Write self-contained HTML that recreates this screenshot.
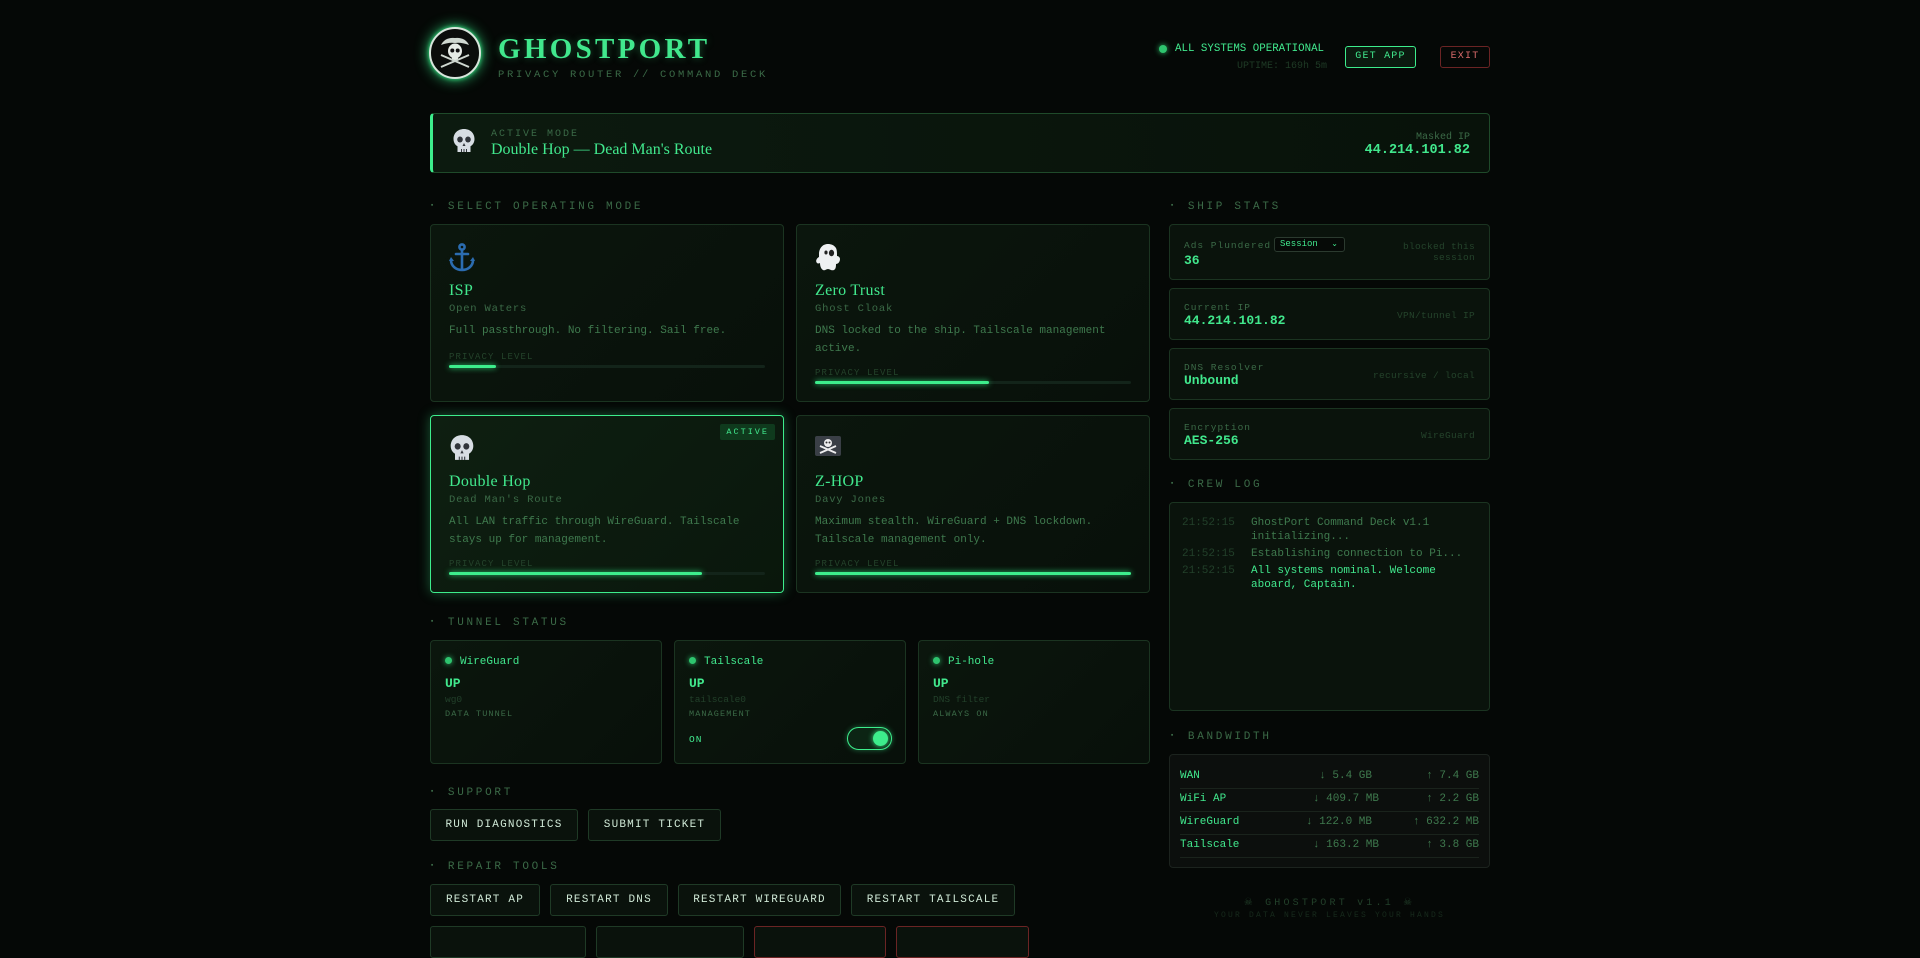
<!DOCTYPE html>
<html><head><meta charset="utf-8"><style>
*{box-sizing:border-box;margin:0;padding:0}
html,body{width:1920px;height:932px;overflow:hidden;background:#050806;font-family:"Liberation Mono",monospace;color:#3fe38a}
.a{position:absolute}
.serif{font-family:"Liberation Serif",serif}
.card{position:absolute;background:linear-gradient(135deg,#0b160d,#08100a);border:1px solid #1b3421;border-radius:4px}
.lbl{position:absolute;font-size:11px;letter-spacing:2.7px;color:#3b6a47}
.lbl:before{content:"▪";font-size:7px;margin-right:11px;vertical-align:2px}
.mt{font-size:16px;color:#41e88d;letter-spacing:.3px}
.ms{font-size:10.5px;letter-spacing:.8px;color:#3b6a47}
.md{font-size:11px;color:#3f7a4e;line-height:18px}
.pl{font-size:9px;letter-spacing:1.1px;color:#24432b}
.bar{height:3px;background:#13241a;border-radius:2px;position:relative}
.bar i{position:absolute;left:0;top:0;bottom:0;background:#3ded8c;border-radius:2px;box-shadow:0 0 6px #2fd67a}
.btn{position:absolute;height:32px;border:1px solid #1f3a26;background:#0a120c;border-radius:3px;color:#cfe8d6;font-size:11px;letter-spacing:1.2px;text-align:center;line-height:30px}
.st{position:absolute;left:1169px;width:321px;background:#0a130c;border:1px solid #1b3421;border-radius:4px}
.sl{font-size:9.5px;letter-spacing:1px;color:#3b6a47}
.sv{font-size:13px;font-weight:bold;color:#41e88d}
.sr{position:absolute;right:14px;font-size:9.5px;color:#24432b;text-align:right;letter-spacing:.3px}
.tn{font-size:11px;color:#41e88d}
.dot{display:inline-block;width:7px;height:7px;border-radius:50%;background:#2ec46e;box-shadow:0 0 6px #2ec46e;margin-right:8px}
</style></head><body>

<div class="a" style="left:429px;top:27px;width:52px;height:52px;border-radius:50%;background:#0b0d0b;border:2px solid #d9e6dc;box-shadow:0 0 14px #2fd67a,0 0 4px #3ded8c">
<svg width="48" height="48" viewBox="0 0 48 48"><path d="M10 16 Q14 8 24 9 Q34 8 38 16 Q30 13 24 14 Q18 13 10 16Z" fill="#cfd8d0"/><ellipse cx="24" cy="22" rx="7" ry="7.5" fill="#e6ece6"/><circle cx="21.3" cy="21.5" r="2" fill="#111"/><circle cx="26.7" cy="21.5" r="2" fill="#111"/><rect x="21" y="27" width="6" height="4" fill="#e6ece6"/><path d="M10 38 L38 26 M10 26 L38 38" stroke="#cfd8d0" stroke-width="2"/></svg></div>
<div class="a serif" style="left:498px;top:33px;font-size:29px;font-weight:bold;letter-spacing:3.3px;color:#41e88d;text-shadow:0 0 8px rgba(60,230,130,.35)">GHOSTPORT</div>
<div class="a" style="left:498px;top:69px;font-size:10.5px;letter-spacing:2.7px;color:#3b6a47">PRIVACY ROUTER // COMMAND DECK</div>

<div class="a" style="left:1159px;top:45px;width:8px;height:8px;border-radius:50%;background:#2ec46e;box-shadow:0 0 6px #2ec46e"></div>
<div class="a" style="left:1175px;top:43px;font-size:10.8px;color:#41e88d">ALL SYSTEMS OPERATIONAL</div>
<div class="a" style="right:593px;top:61px;font-size:10px;color:#1f3b26">UPTIME: 169h 5m</div>
<div class="a" style="left:1345px;top:46px;width:71px;height:22px;border:1px solid #3ded8c;border-radius:3px;background:#0b1a0f;color:#41e88d;font-size:10px;letter-spacing:1.2px;text-align:center;line-height:20px">GET APP</div>
<div class="a" style="left:1440px;top:46px;width:50px;height:22px;border:1px solid #6b2424;border-radius:3px;color:#d86a6a;font-size:10px;letter-spacing:1.2px;text-align:center;line-height:20px">EXIT</div>

<div class="a" style="left:430px;top:113px;width:1060px;height:60px;border:1px solid #1f4a2a;border-left:3px solid #3ded8c;border-radius:4px;background:linear-gradient(90deg,#0c1a0f,#08120a)"></div>
<svg class="a" style="left:452px;top:128px" width="24" height="26" viewBox="0 0 24 26"><path d="M12 1C5.5 1 1.5 5.5 1.5 11c0 3.5 1.8 6 4 7.3V24h13v-5.7c2.2-1.3 4-3.8 4-7.3C22.5 5.5 18.5 1 12 1z" fill="#d7dde3"/><ellipse cx="8" cy="11.5" rx="2.8" ry="3" fill="#30343a"/><ellipse cx="16" cy="11.5" rx="2.8" ry="3" fill="#30343a"/><path d="M12 15l-1.5 3h3z" fill="#30343a"/><path d="M9.5 21v3M12 21v3M14.5 21v3" stroke="#30343a" stroke-width="1"/></svg>
<div class="a" style="left:491px;top:129px;font-size:10px;letter-spacing:2px;color:#3b6a47">ACTIVE MODE</div>
<div class="a serif" style="left:491px;top:141px;font-size:16px;color:#41e88d">Double Hop — Dead Man's Route</div>
<div class="a" style="right:450px;top:132px;font-size:10px;color:#3b6a47">Masked IP</div>
<div class="a" style="right:450px;top:143px;font-size:13.5px;font-weight:bold;color:#41e88d">44.214.101.82</div>

<div class="lbl" style="left:430px;top:201px">SELECT OPERATING MODE</div>

<div class="card" style="left:430px;top:224px;width:354px;height:178px">
<svg class="a" style="left:18px;top:18px" width="26" height="30" viewBox="0 0 26 30"><g fill="none" stroke="#2b6cb0" stroke-width="2.6" stroke-linecap="round"><circle cx="13" cy="4" r="2.6"/><path d="M13 7v20M7 11h12M2 17c0 6 5 10 11 10s11-4 11-10"/></g><path d="M0 18l2-4 3 4zM26 18l-2-4-3 4z" fill="#2b6cb0"/></svg>
<div class="a serif mt" style="left:18px;top:57px">ISP</div>
<div class="a ms" style="left:18px;top:78px">Open Waters</div>
<div class="a md" style="left:18px;top:97px">Full passthrough. No filtering. Sail free.</div>
<div class="a pl" style="left:18px;top:127px">PRIVACY LEVEL</div>
<div class="a bar" style="left:18px;top:140px;width:316px"><i style="width:15%"></i></div>
</div>

<div class="card" style="left:796px;top:224px;width:354px;height:178px">
<svg class="a" style="left:18px;top:18px" width="27" height="28" viewBox="0 0 27 28"><path d="M13 1C7 1 4 6 4 11v3c-2 1-4 4-2 6 1 1 3 0 3 0 0 3 1 6 3 7 2 1 3-1 5-1s3 2 6 1c2-1 2-4 2-6 2 0 4-2 4-5 0-2-2-3-3-3 0-3 0-6-1-8-2-3-5-4-8-4z" fill="#eef0f2"/><ellipse cx="11" cy="9.5" rx="1.6" ry="2" fill="#222"/><ellipse cx="16.5" cy="10" rx="2.6" ry="3.2" fill="#222"/></svg>
<div class="a serif mt" style="left:18px;top:57px">Zero Trust</div>
<div class="a ms" style="left:18px;top:78px">Ghost Cloak</div>
<div class="a md" style="left:18px;top:97px;width:320px">DNS locked to the ship. Tailscale management active.</div>
<div class="a pl" style="left:18px;top:143px">PRIVACY LEVEL</div>
<div class="a bar" style="left:18px;top:156px;width:316px"><i style="width:55%"></i></div>
</div>

<div class="card" style="left:430px;top:415px;width:354px;height:178px;border-color:#3ded8c;box-shadow:0 0 12px rgba(61,237,140,.35);background:linear-gradient(135deg,#0e1f11,#0a170c)">
<div class="a" style="right:8px;top:8px;background:#0f3a1d;color:#41e88d;font-size:8.5px;letter-spacing:2px;padding:3px 6px;border-radius:2px">ACTIVE</div>
<svg class="a" style="left:18px;top:18px" width="26" height="28" viewBox="0 0 24 26"><path d="M12 1C5.5 1 1.5 5.5 1.5 11c0 3.5 1.8 6 4 7.3V24h13v-5.7c2.2-1.3 4-3.8 4-7.3C22.5 5.5 18.5 1 12 1z" fill="#d7dde3"/><ellipse cx="8" cy="11.5" rx="2.8" ry="3" fill="#30343a"/><ellipse cx="16" cy="11.5" rx="2.8" ry="3" fill="#30343a"/><path d="M12 15l-1.5 3h3z" fill="#30343a"/><path d="M9.5 21v3M12 21v3M14.5 21v3" stroke="#30343a" stroke-width="1"/></svg>
<div class="a serif mt" style="left:18px;top:57px">Double Hop</div>
<div class="a ms" style="left:18px;top:78px">Dead Man's Route</div>
<div class="a md" style="left:18px;top:97px;width:320px">All LAN traffic through WireGuard. Tailscale stays up for management.</div>
<div class="a pl" style="left:18px;top:143px">PRIVACY LEVEL</div>
<div class="a bar" style="left:18px;top:156px;width:316px"><i style="width:80%"></i></div>
</div>

<div class="card" style="left:796px;top:415px;width:354px;height:178px">
<svg class="a" style="left:18px;top:20px" width="26" height="20" viewBox="0 0 26 20"><rect width="26" height="20" rx="2" fill="#3a3f46"/><ellipse cx="13" cy="7" rx="4" ry="4" fill="#eee"/><circle cx="11.5" cy="6.5" r="1" fill="#333"/><circle cx="14.5" cy="6.5" r="1" fill="#333"/><path d="M5 10l16 7M21 10L5 17" stroke="#eee" stroke-width="1.8"/></svg>
<div class="a serif mt" style="left:18px;top:57px">Z-HOP</div>
<div class="a ms" style="left:18px;top:78px">Davy Jones</div>
<div class="a md" style="left:18px;top:97px;width:320px">Maximum stealth. WireGuard + DNS lockdown. Tailscale management only.</div>
<div class="a pl" style="left:18px;top:143px">PRIVACY LEVEL</div>
<div class="a bar" style="left:18px;top:156px;width:316px"><i style="width:100%"></i></div>
</div>

<div class="lbl" style="left:430px;top:617px">TUNNEL STATUS</div>
<div class="card" style="left:430px;top:640px;width:232px;height:124px">
<div class="a tn" style="left:14px;top:15px"><span class="dot"></span>WireGuard</div>
<div class="a sv" style="left:14px;top:35px">UP</div>
<div class="a" style="left:14px;top:53px;font-size:9.5px;color:#22402a">wg0</div>
<div class="a" style="left:14px;top:68px;font-size:8.5px;letter-spacing:1.1px;color:#3b6a47">DATA TUNNEL</div>
</div>
<div class="card" style="left:674px;top:640px;width:232px;height:124px">
<div class="a tn" style="left:14px;top:15px"><span class="dot"></span>Tailscale</div>
<div class="a sv" style="left:14px;top:35px">UP</div>
<div class="a" style="left:14px;top:53px;font-size:9.5px;color:#22402a">tailscale0</div>
<div class="a" style="left:14px;top:68px;font-size:8.5px;letter-spacing:1.1px;color:#3b6a47">MANAGEMENT</div>
<div class="a" style="left:14px;top:93px;font-size:9.5px;letter-spacing:1px;color:#41e88d">ON</div>
<div class="a" style="left:172px;top:86px;width:45px;height:23px;border:1.5px solid #3ded8c;border-radius:12px;background:#0c2414;box-shadow:0 0 6px rgba(61,237,140,.4)"><div class="a" style="right:3px;top:2.5px;width:15px;height:15px;border-radius:50%;background:#3ded8c;box-shadow:0 0 6px #3ded8c"></div></div>
</div>
<div class="card" style="left:918px;top:640px;width:232px;height:124px">
<div class="a tn" style="left:14px;top:15px"><span class="dot"></span>Pi-hole</div>
<div class="a sv" style="left:14px;top:35px">UP</div>
<div class="a" style="left:14px;top:53px;font-size:9.5px;color:#22402a">DNS filter</div>
<div class="a" style="left:14px;top:68px;font-size:8.5px;letter-spacing:1.1px;color:#3b6a47">ALWAYS ON</div>
</div>

<div class="lbl" style="left:430px;top:787px">SUPPORT</div>
<div class="btn" style="left:430px;top:809px;width:148px">RUN DIAGNOSTICS</div>
<div class="btn" style="left:588px;top:809px;width:133px">SUBMIT TICKET</div>

<div class="lbl" style="left:430px;top:861px">REPAIR TOOLS</div>
<div class="btn" style="left:430px;top:884px;width:110px">RESTART AP</div>
<div class="btn" style="left:550px;top:884px;width:118px">RESTART DNS</div>
<div class="btn" style="left:678px;top:884px;width:163px">RESTART WIREGUARD</div>
<div class="btn" style="left:851px;top:884px;width:164px">RESTART TAILSCALE</div>
<div class="btn" style="left:430px;top:926px;width:156px"></div>
<div class="btn" style="left:596px;top:926px;width:148px"></div>
<div class="btn" style="left:754px;top:926px;width:132px;border-color:#6b2424"></div>
<div class="btn" style="left:896px;top:926px;width:133px;border-color:#6b2424"></div>

<div class="lbl" style="left:1170px;top:201px">SHIP STATS</div>
<div class="st" style="top:224px;height:56px">
<div class="a sl" style="left:14px;top:15px">Ads Plundered</div>
<div class="a" style="left:104px;top:12px;width:71px;height:15px;border:1px solid #2b3a2f;border-radius:3px;background:#060a07;font-size:9px;color:#41e88d;padding-left:5px;line-height:13px">Session<span style="position:absolute;right:6px;font-size:8px">⌄</span></div>
<div class="a sv" style="left:14px;top:28px">36</div>
<div class="sr" style="top:16px;line-height:11px">blocked this<br>session</div>
</div>
<div class="st" style="top:288px;height:52px">
<div class="a sl" style="left:14px;top:13px">Current IP</div>
<div class="a sv" style="left:14px;top:24px">44.214.101.82</div>
<div class="sr" style="top:21px">VPN/tunnel IP</div>
</div>
<div class="st" style="top:348px;height:52px">
<div class="a sl" style="left:14px;top:13px">DNS Resolver</div>
<div class="a sv" style="left:14px;top:24px">Unbound</div>
<div class="sr" style="top:21px">recursive / local</div>
</div>
<div class="st" style="top:408px;height:52px">
<div class="a sl" style="left:14px;top:13px">Encryption</div>
<div class="a sv" style="left:14px;top:24px">AES-256</div>
<div class="sr" style="top:21px">WireGuard</div>
</div>

<div class="lbl" style="left:1170px;top:479px">CREW LOG</div>
<div class="st" style="top:502px;height:209px;font-size:11px;line-height:14px">
<div class="a" style="left:12px;top:13px;color:#22402a">21:52:15</div><div class="a" style="left:81px;top:13px;color:#3f7a4e">GhostPort Command Deck v1.1<br>initializing...</div>
<div class="a" style="left:12px;top:44px;color:#22402a">21:52:15</div><div class="a" style="left:81px;top:44px;color:#3f7a4e">Establishing connection to Pi...</div>
<div class="a" style="left:12px;top:61px;color:#22402a">21:52:15</div><div class="a" style="left:81px;top:61px;color:#41e88d">All systems nominal. Welcome<br>aboard, Captain.</div>
</div>

<div class="lbl" style="left:1170px;top:731px">BANDWIDTH</div>
<div class="st" style="top:754px;height:114px;background:#0c0f0d;border-color:#1c231e;font-size:11px">
<div class="a" style="left:10px;top:11px;width:299px">
<div style="display:flex;height:23px;line-height:21px;border-bottom:1px solid #1a231c"><span style="width:92px;color:#41e88d">WAN</span><span style="width:100px;text-align:right;color:#3f7a4e">↓ 5.4 GB</span><span style="flex:1;text-align:right;color:#3f7a4e">↑ 7.4 GB</span></div>
<div style="display:flex;height:23px;line-height:21px;border-bottom:1px solid #1a231c"><span style="width:92px;color:#41e88d">WiFi AP</span><span style="width:107px;text-align:right;color:#3f7a4e">↓ 409.7 MB</span><span style="flex:1;text-align:right;color:#3f7a4e">↑ 2.2 GB</span></div>
<div style="display:flex;height:23px;line-height:21px;border-bottom:1px solid #1a231c"><span style="width:92px;color:#41e88d">WireGuard</span><span style="width:100px;text-align:right;color:#3f7a4e">↓ 122.0 MB</span><span style="flex:1;text-align:right;color:#3f7a4e">↑ 632.2 MB</span></div>
<div style="display:flex;height:23px;line-height:21px;border-bottom:1px solid #1a231c"><span style="width:92px;color:#41e88d">Tailscale</span><span style="width:107px;text-align:right;color:#3f7a4e">↓ 163.2 MB</span><span style="flex:1;text-align:right;color:#3f7a4e">↑ 3.8 GB</span></div>
</div></div>

<div class="a" style="left:1169px;width:321px;top:897px;text-align:center;font-size:10px;letter-spacing:3.2px;color:#22402a">☠ GHOSTPORT v1.1 ☠</div>
<div class="a" style="left:1169px;width:321px;top:911px;text-align:center;font-size:8px;letter-spacing:2.2px;color:#172a1c">YOUR DATA NEVER LEAVES YOUR HANDS</div>
</body></html>
